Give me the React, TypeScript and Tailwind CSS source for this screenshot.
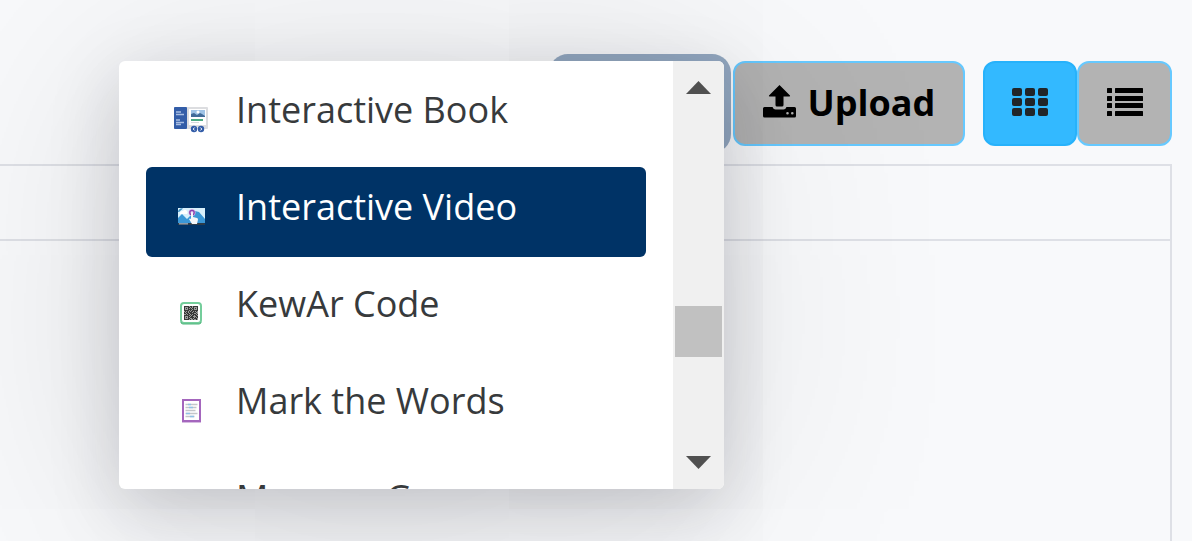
import React, { useState } from "react";

interface ContentType {
  name: string;
  icon: React.ReactNode;
}

const BookIcon = () => (
  <svg className="w-9 h-9" viewBox="0 0 36 36" aria-hidden="true">
    <rect x="1" y="6" width="34" height="22" rx="1" fill="#dcdde0" />
    <rect x="1" y="6" width="13" height="22" rx="1" fill="#335da8" />
    <path d="M3 11h5M3 13.500h8M3 19h4M3 21.500h8M3 23.500h5" stroke="#a9bee2" strokeWidth="1.300" />
    <rect x="16" y="8" width="17" height="16" fill="#fff" />
    <rect x="18" y="9" width="14" height="6" fill="#9fc3e6" />
    <circle cx="25" cy="11" r="1.500" fill="#fff" />
    <path d="M18 16v-3l3-1 3 2 3-2 2 1 3 2v1z" fill="#426b98" />
    <path d="M18 19h12" stroke="#4bab83" strokeWidth="1.800" />
    <path d="M18 21.500h8" stroke="#d8dadd" />
    <circle cx="21" cy="28" r="3.200" fill="#335da8" />
    <circle cx="28" cy="28" r="3.200" fill="#335da8" />
    <path d="M21.700 26.500l-1.500 1.500 1.500 1.500M27.300 26.500l1.500 1.500-1.500 1.500" fill="none" stroke="#fff" />
  </svg>
);

const VideoIcon = () => (
  <svg className="w-9 h-9" viewBox="0 0 36 36" aria-hidden="true">
    <rect x="5" y="10" width="27" height="17" fill="#d9f0fb" />
    <path d="M5 14a4 4 0 0 1 5-3.500L6 14z" fill="#3e8fc2" />
    <path d="M7 16a2.500 2.500 0 0 1 3-3 2.500 2.500 0 0 1 4 3z" fill="#fff" />
    <path d="M5 20l4-4 5 5 8-8 4 1 6 7v4H5z" fill="#3b97d6" />
    <rect x="5" y="25" width="27" height="2" fill="#2d3b48" />
    <rect x="6" y="25" width="9" height="1.500" fill="#8e9aa6" />
    <circle cx="19" cy="14.500" r="3.500" fill="#d9b8e6" />
    <circle cx="19" cy="14.500" r="2.200" fill="none" stroke="#8b3fae" strokeWidth="1.300" />
    <path d="M18 15a1 1 0 0 1 2 0v4l4 1q1 0 1 1.500l-1 4.500h-5l-3-5q1-1 2 0z" fill="#f4f6f8" />
  </svg>
);

// Módulos del código: cada fila es un patrón de 1 y 0
const codeRows = [
  "11111011011111",
  "10001101010001",
  "10101010110101",
  "10001111010001",
  "11111010111111",
  "01010101101010",
  "10110111011100",
  "11011011110010",
  "00101101011101",
  "11111010110110",
  "10001101100011",
  "10101011110101",
  "10001100101110",
  "11111010010010",
];

const CodeIcon = () => (
  <svg className="w-9 h-9" viewBox="0 0 36 36" aria-hidden="true">
    <rect x="8" y="8" width="20" height="20" rx="3" fill="#fff" stroke="#74cd9b" strokeWidth="2" />
    <path d="M8 27q0 2 2 2h16q2 0 2-2" stroke="#4fb57c" fill="none" />
    <rect x="11" y="11" width="14" height="14" fill="#9a9a9a" />
    {codeRows.map((row, y) =>
      row.split("").map((cell, x) =>
        cell === "1" ? <rect key={`${x}-${y}`} x={11 + x} y={11 + y} width="1" height="1" fill="#383838" /> : null
      )
    )}
  </svg>
);

const WordsIcon = () => (
  <svg className="w-9 h-9" viewBox="0 0 36 36" aria-hidden="true">
    <rect x="10" y="8" width="17" height="21" fill="#fff" stroke="#a466bd" strokeWidth="2" />
    <path d="M9 30.500h19" stroke="#d7bce2" />
    <path d="M12.500 12.500h12M12.500 15.500h11M12.500 18.500h10M12.500 21.500h12M12.500 24.500h9" stroke="#c4c6c9" strokeWidth="1.300" />
    <path d="M15 12.500h3M16 15.500h4M13 21.500h4M17 24.500h4" stroke="#8fc1e6" strokeWidth="1.300" />
  </svg>
);

const UploadIcon = () => (
  <svg className="w-[33px] h-[33px] mb-[3px]" viewBox="0 0 33 33" fill="currentColor" aria-hidden="true">
    <path d="M16.500 0L27 10.500q.5 1-.8 1H20.500V20q0 1.500-1.500 1.500h-5q-1.500 0-1.500-1.500v-8.500H6.800q-1.300 0-.8-1z" />
    <path
      fillRule="evenodd"
      d="M1.500 22H9.500q1 2.500 3 2.500h8q2 0 3-2.500h8q1.500 0 1.500 1.500v7.500q0 1.500-1.500 1.500h-30Q0 32.500 0 31v-7.500Q0 22 1.500 22zM24.500 27a1.300 1.300 0 1 0 0 2.600 1.300 1.300 0 0 0 0-2.600zM29.300 27a1.300 1.300 0 1 0 0 2.600 1.300 1.300 0 0 0 0-2.600z"
    />
  </svg>
);

const GridIcon = () => (
  <svg className="w-9 h-7 mb-1" viewBox="0 0 36 28" fill="currentColor" aria-hidden="true">
    {[0, 10, 20].map((y) =>
      [0, 13, 26].map((x) => <rect key={`${x}-${y}`} x={x} y={y} width="10" height="8" rx="2" />)
    )}
  </svg>
);

const ListIcon = () => (
  <svg className="w-9 h-7 mb-1" viewBox="0 0 36 28" fill="currentColor" aria-hidden="true">
    {[0, 8, 15, 23].map((y) => (
      <g key={y}>
        <rect x="0" y={y} width="5" height="5" rx="0.500" />
        <rect x="8" y={y} width="28" height="5" rx="0.500" />
      </g>
    ))}
  </svg>
);

const contentTypes: ContentType[] = [
  { name: "Interactive Book", icon: <BookIcon /> },
  { name: "Interactive Video", icon: <VideoIcon /> },
  { name: "KewAr Code", icon: <CodeIcon /> },
  { name: "Mark the Words", icon: <WordsIcon /> },
  { name: "Memory Game", icon: null },
];

export default function App() {
  const [selected, setSelected] = useState("Interactive Video");
  const [view, setView] = useState("grid");

  const viewClass = (name: string) =>
    view === name
      ? "bg-[#33b9ff] border-[#27b2fb] text-[#212529]"
      : "bg-[#b3b3b3] border-[#66c9ff] text-black";

  return (
    <div className="min-h-screen flex flex-col overflow-hidden bg-[#f8f9fb] pt-[61px] pr-5 font-['Open_Sans','Noto_Sans',sans-serif]">
      <div className="flex justify-end">
        <div className="relative z-10 mr-[9px]">
          <button
            type="button"
            aria-label="Add"
            aria-haspopup="listbox"
            className="block w-[168px] h-[85px] rounded-xl bg-[#94a9c2] ring-[7px] ring-[#94a9c2]"
          />

          {/* Menú desplegable con los tipos de contenido */}
          <div className="absolute top-0 right-0 flex w-[605px] h-[428px] overflow-hidden rounded-md bg-white shadow-[0_20px_70px_rgba(20,20,40,0.18),0_20px_240px_rgba(0,0,0,0.14)]">
            <div role="listbox" aria-label="Content types" className="flex-1 flex flex-col gap-[7px] px-[27px] pt-[9px]">
              {contentTypes.map((type) => (
                <button
                  key={type.name}
                  type="button"
                  role="option"
                  aria-selected={selected === type.name}
                  onClick={() => setSelected(type.name)}
                  className={`flex shrink-0 h-[90px] items-center rounded-md pl-[27px] text-left ${
                    selected === type.name ? "bg-[#003366] text-white" : "text-[#373a3c]"
                  }`}
                >
                  <span className="w-9 h-9 mt-2 mr-[27px]">{type.icon}</span>
                  <span className="pb-2.5 text-[36px] leading-[54px] whitespace-nowrap">{type.name}</span>
                </button>
              ))}
            </div>

            {/* Barra de desplazamiento */}
            <div className="flex flex-col justify-between w-[51px] bg-[#f0f0f0]">
              <button type="button" aria-label="Scroll up" className="flex h-[53px] items-center justify-center">
                <svg className="w-[25px] h-[13px]" viewBox="0 0 25 13" fill="#505050" aria-hidden="true">
                  <path d="M12.500 0L25 13H0z" />
                </svg>
              </button>
              <div className="flex-1 px-0.5 pt-48">
                <div className="h-[51px] bg-[#c1c1c1]" />
              </div>
              <button type="button" aria-label="Scroll down" className="flex h-[53px] items-center justify-center">
                <svg className="w-[25px] h-[13px]" viewBox="0 0 25 13" fill="#505050" aria-hidden="true">
                  <path d="M0 0h25L12.500 13z" />
                </svg>
              </button>
            </div>
          </div>
        </div>

        <button
          type="button"
          className="flex w-[232px] h-[85px] items-center justify-center gap-3 rounded-xl border-2 border-[#66c9ff] bg-[#b3b3b3] pb-0.5 text-[36px] font-bold text-black"
        >
          <UploadIcon />
          Upload
        </button>

        <div className="flex ml-[18px]">
          <button
            type="button"
            aria-label="Grid view"
            onClick={() => setView("grid")}
            className={`flex w-[94px] h-[85px] items-center justify-center rounded-xl border-2 ${viewClass("grid")}`}
          >
            <GridIcon />
          </button>
          <button
            type="button"
            aria-label="List view"
            onClick={() => setView("list")}
            className={`flex w-[95px] h-[85px] items-center justify-center rounded-xl border-2 ${viewClass("list")}`}
          >
            <ListIcon />
          </button>
        </div>
      </div>

      <div className="flex-1 flex flex-col mt-[18px] border-t-2 border-r-2 border-[#dee0e6]">
        <div className="h-[75px] border-b-2 border-[#dee0e6]" />
      </div>
    </div>
  );
}
